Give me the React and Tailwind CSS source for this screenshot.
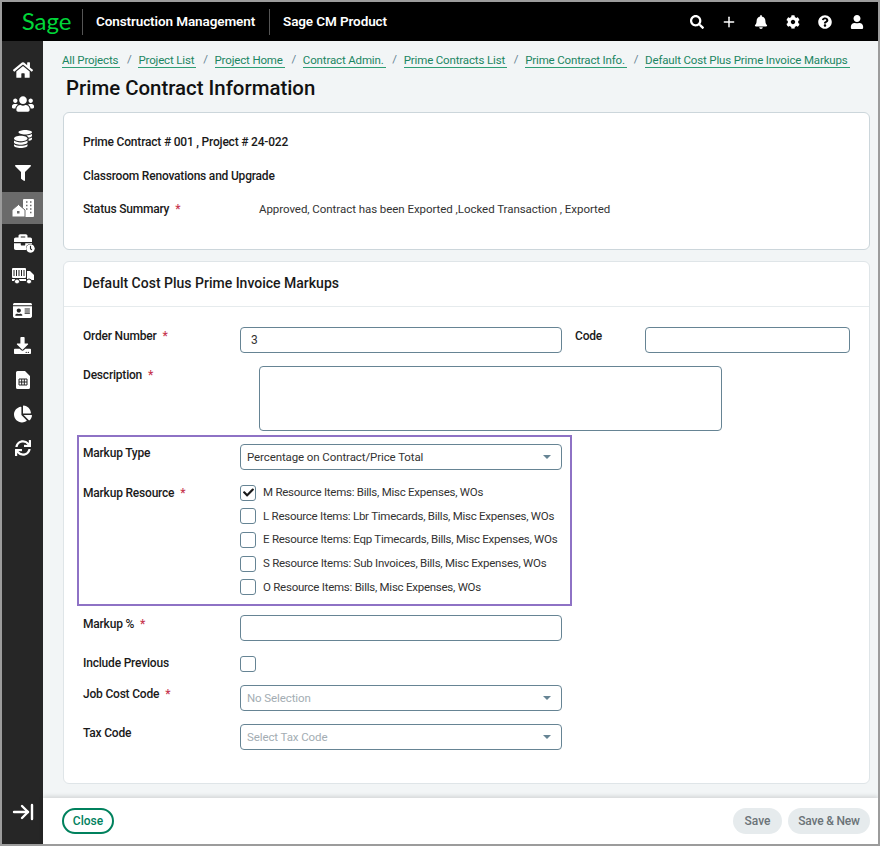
import { Plus, ArrowRightToLine } from "lucide-react";
import {
  FaHome, FaUsers, FaCoins, FaFilter, FaBriefcase, FaIdCard,
  FaDownload, FaChartPie, FaSync, FaSearch, FaBell, FaCog, FaQuestionCircle, FaUser, FaCheck, FaClock,
} from "react-icons/fa";

const crumbs = [
  "All Projects", "Project List", "Project Home", "Contract Admin.",
  "Prime Contracts List", "Prime Contract Info.", "Default Cost Plus Prime Invoice Markups",
];

const resources = [
  ["M Resource Items: Bills, Misc Expenses, WOs", true],
  ["L Resource Items: Lbr Timecards, Bills, Misc Expenses, WOs", false],
  ["E Resource Items: Eqp Timecards, Bills, Misc Expenses, WOs", false],
  ["S Resource Items: Sub Invoices, Bills, Misc Expenses, WOs", false],
  ["O Resource Items: Bills, Misc Expenses, WOs", false],
];

function Req() {
  return <span className="ml-[6px] text-[#c7384f]">*</span>;
}

function Label({ children, required }) {
  return (
    <div className="w-[157px] shrink-0 pt-[1px] text-[12px] leading-[16px] font-medium tracking-[-0.2px] text-[#1a1a1a]">
      {children}
      {required && <Req />}
    </div>
  );
}

function Input({ value = "", className = "w-[322px]" }) {
  return (
    <div className={`h-[26px] rounded-[4px] border border-[#668494] px-[10px] text-[12px] leading-[25px] text-[#333] ${className}`}>
      {value}
    </div>
  );
}

function Select({ value, muted }) {
  return (
    <div className="flex h-[26px] w-[322px] items-center justify-between rounded-[4px] border border-[#668494] pl-[6px] pr-[10px]">
      <span className={`pt-[1px] text-[11.5px] tracking-[-0.1px] ${muted ? "text-[#a3adb3]" : "text-[#333]"}`}>{value}</span>
      <span className="h-0 w-0 border-x-[4px] border-t-[4px] border-x-transparent border-t-[#668494]" />
    </div>
  );
}

function Check({ checked }) {
  return (
    <span className="flex h-[16px] w-[16px] shrink-0 items-center justify-center rounded-[3px] border border-[#668494] bg-white">
      {checked && <FaCheck className="text-[11px] text-[#1a1a1a]" />}
    </span>
  );
}

function SideIcon({ children, active }) {
  return (
    <div className={`flex h-[32px] shrink-0 items-center justify-center text-[19px] text-white ${active ? "bg-[#6b6b6b]" : ""}`}>
      {children}
    </div>
  );
}

function TruckIcon() {
  return (
    <svg width="22" height="18" viewBox="0 0 22 18" fill="white">
      <rect x="0" y="1" width="14" height="10" rx="1" />
      <path d="M2 3v6M4.5 3v6M7 3v6M9.5 3v6M12 3v6" stroke="#262626" strokeWidth="1" />
      <path d="M15 4h3l4 4v5h-7z" />
      <rect x="0" y="12" width="14" height="2" />
      <circle cx="5" cy="14.5" r="2.5" stroke="#262626" />
      <circle cx="17" cy="14.5" r="2.5" stroke="#262626" />
    </svg>
  );
}

function SheetIcon() {
  return (
    <svg width="14" height="18" viewBox="0 0 14 18" fill="white">
      <path d="M1.5 0H9l5 5v11.5a1.5 1.5 0 0 1-1.5 1.5h-11A1.5 1.5 0 0 1 0 16.5v-15A1.5 1.5 0 0 1 1.5 0z" />
      <path d="M3 8h8v6H3zM3 11h8M5.7 8v6M8.3 8v6" fill="none" stroke="#262626" strokeWidth="1" />
    </svg>
  );
}

function PropertyIcon() {
  return (
    <svg width="22" height="18" viewBox="0 0 22 18" fill="white">
      <rect x="11" y="0" width="11" height="18" rx="1" />
      <path d="M14 3h1.5M18 3h1.5M14 6.5h1.5M18 6.5h1.5M14 10h1.5M18 10h1.5M18 13.5h1.5" stroke="#6b6b6b" strokeWidth="1.6" />
      <path d="M6.5 5.5 13 11v7H0v-7z" stroke="#6b6b6b" strokeWidth="1" />
      <rect x="5" y="12" width="2.5" height="2.5" fill="#6b6b6b" />
    </svg>
  );
}

export default function App() {
  return (
    <div className="flex h-[846px] w-[880px] flex-col overflow-hidden border-2 border-[#9c9c9c] bg-white font-['Roboto',sans-serif]">
      {/* Top bar */}
      <header className="flex h-[39px] shrink-0 items-center bg-black text-white">
        <div className="flex w-[80px] justify-center pl-[9px] pb-[2px]">
          <span className="font-['Lato',sans-serif] text-[24px] leading-none font-normal text-[#00d639]">Sage</span>
        </div>
        <div className="h-[26px] w-px bg-[#555]" />
        <div className="w-[186px] pl-[13px] text-[13.5px] font-semibold tracking-[-0.1px]">Construction Management</div>
        <div className="h-[26px] w-px bg-[#555]" />
        <div className="pl-[13px] text-[13.5px] font-semibold tracking-[-0.1px]">Sage CM Product</div>
        <div className="ml-auto flex items-center pr-[5px] text-[14px]">
          <span className="flex w-[32px] justify-center"><FaSearch /></span>
          <span className="flex w-[32px] justify-center"><Plus size={16} strokeWidth={2.2} /></span>
          <span className="flex w-[32px] justify-center"><FaBell /></span>
          <span className="flex w-[32px] justify-center"><FaCog /></span>
          <span className="flex w-[32px] justify-center"><FaQuestionCircle /></span>
          <span className="flex w-[32px] justify-center"><FaUser /></span>
        </div>
      </header>

      <div className="flex min-h-0 flex-1">
        {/* Side nav */}
        <aside className="flex w-[41px] shrink-0 flex-col gap-[2.4px] bg-[#262626] pt-[13px]">
          <SideIcon><FaHome className="text-[20px]" /></SideIcon>
          <SideIcon><FaUsers className="text-[22px]" /></SideIcon>
          <SideIcon><FaCoins className="text-[18px]" /></SideIcon>
          <SideIcon><FaFilter className="text-[16px]" /></SideIcon>
          <SideIcon active><PropertyIcon /></SideIcon>
          <SideIcon>
            <span className="relative">
              <FaBriefcase className="text-[18px]" />
              <FaClock className="absolute -right-[3px] -bottom-[2px] rounded-full bg-[#262626] text-[9px]" />
            </span>
          </SideIcon>
          <SideIcon><TruckIcon /></SideIcon>
          <SideIcon><FaIdCard /></SideIcon>
          <SideIcon><FaDownload className="text-[17px]" /></SideIcon>
          <SideIcon><SheetIcon /></SideIcon>
          <SideIcon><FaChartPie className="text-[18px]" /></SideIcon>
          <SideIcon><FaSync className="text-[16px]" /></SideIcon>
          <div className="mt-auto flex h-[44px] items-start justify-center text-white">
            <ArrowRightToLine size={24} strokeWidth={2.4} />
          </div>
        </aside>

        <div className="flex min-w-0 flex-1 flex-col">
          <main className="min-h-0 flex-1 bg-[#f2f5f6] pl-[20px] pr-[8px] pt-[10px]">
            {/* Breadcrumb */}
            <nav className="-ml-[1px] flex h-[17px] items-center pt-[1px] text-[11.5px] tracking-[-0.15px] whitespace-nowrap text-[#1b8562]">
              {crumbs.map((c, i) => (
                <span key={c} className="flex items-center">
                  {i > 0 && <span className="mx-[6.75px] text-[#668494]">/</span>}
                  <span className="border-b border-[#2e9e75] pr-[2px] leading-[14px]">{c}</span>
                </span>
              ))}
            </nav>
            <h1 className="mt-[6px] pl-[3px] text-[20.4px] leading-[28px] font-medium text-[#111]">Prime Contract Information</h1>

            {/* Summary card */}
            <section className="mt-[10px] h-[138px] rounded-[6px] border border-[#ccd6db] bg-white px-[19px] pt-[21px] text-[12px]">
              <div className="leading-[16px] font-medium tracking-[-0.2px] text-[#1a1a1a]">Prime Contract # 001 , Project # 24-022</div>
              <div className="mt-[18px] leading-[16px] font-medium tracking-[-0.2px] text-[#1a1a1a]">Classroom Renovations and Upgrade</div>
              <div className="mt-[17px] flex leading-[16px]">
                <div className="w-[176px] font-medium tracking-[-0.2px] text-[#1a1a1a]">Status Summary<Req /></div>
                <div className="text-[11.5px] tracking-[-0.05px] text-[#333]">Approved, Contract has been Exported ,Locked Transaction , Exported</div>
              </div>
            </section>

            {/* Markups card */}
            <section className="mt-[11px] h-[523px] rounded-[6px] border border-[#dfe5e8] bg-white">
              <h2 className="flex h-[45px] items-center border-b border-[#e6ebed] pb-[2px] pl-[19px] text-[14px] font-medium text-[#1a1a1a]">
                Default Cost Plus Prime Invoice Markups
              </h2>
              <div className="px-[19px] pt-[20px]">
                <div className="flex">
                  <Label required>Order Number</Label>
                  <Input value="3" />
                  <div className="ml-[13px] w-[70px] pt-[1px] text-[12px] leading-[16px] font-medium tracking-[-0.2px] text-[#1a1a1a]">Code</div>
                  <Input className="w-[205px]" />
                </div>
                <div className="mt-[13px] flex">
                  <div className="w-[176px] shrink-0 pt-[1px] text-[12px] leading-[16px] font-medium tracking-[-0.2px] text-[#1a1a1a]">Description<Req /></div>
                  <div className="h-[65px] w-[463px] rounded-[4px] border border-[#668494]" />
                </div>

                {/* Highlighted rows */}
                <div className="mt-[4px] -ml-[6px] w-[495px] border-2 border-[#8e72c5] pl-[4px] pt-[7px]">
                  <div className="flex">
                    <Label>Markup Type</Label>
                    <Select value="Percentage on Contract/Price Total" />
                  </div>
                  <div className="mt-[14px] flex">
                    <Label required>Markup Resource</Label>
                    <div className="flex flex-col gap-[7.7px] pb-[9px]">
                      {resources.map(([text, checked]) => (
                        <label key={text} className="flex h-[16px] items-center gap-[7px] pt-[1px] text-[11.5px] tracking-[-0.25px] whitespace-nowrap text-[#333]">
                          <Check checked={checked} />
                          {text}
                        </label>
                      ))}
                    </div>
                  </div>
                </div>

                <div className="mt-[9px] flex">
                  <Label required>Markup %</Label>
                  <Input />
                </div>
                <div className="mt-[15px] flex">
                  <div className="w-[157px] shrink-0 text-[12px] leading-[15px] font-medium tracking-[-0.2px] text-[#1a1a1a]">Include Previous</div>
                  <Check />
                </div>
                <div className="mt-[13px] flex">
                  <Label required>Job Cost Code</Label>
                  <Select value="No Selection" muted />
                </div>
                <div className="mt-[13px] flex">
                  <Label>Tax Code</Label>
                  <Select value="Select Tax Code" muted />
                </div>
              </div>
            </section>
          </main>

          {/* Footer */}
          <footer className="relative flex h-[46px] shrink-0 items-center gap-[6px] bg-white pl-[19px] pr-[8px] text-[12px] font-medium shadow-[0_-2px_4px_rgba(0,0,0,0.12)]">
            <button className="mr-auto h-[26px] w-[52px] rounded-full border-2 border-[#00815d] text-[#00815d]">Close</button>
            <button className="h-[26px] w-[49px] rounded-full bg-[#e6ebed] text-[#6b7378]">Save</button>
            <button className="h-[26px] w-[82px] rounded-full bg-[#e6ebed] tracking-[-0.2px] text-[#6b7378]">Save &amp; New</button>
          </footer>
        </div>
      </div>
    </div>
  );
}
